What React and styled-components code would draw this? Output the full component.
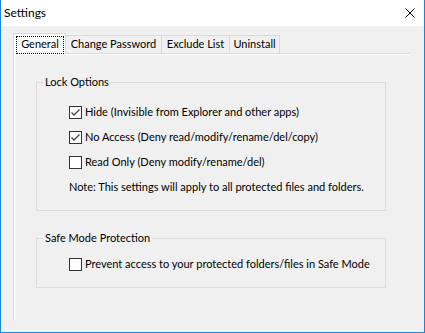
import React from 'react';
import styled, { createGlobalStyle, css } from 'styled-components';

const Global = createGlobalStyle`
  html, body { margin: 0; padding: 0; background: #f0f0f0; }
  body {
    font-family: Lato, "Noto Sans", sans-serif;
    font-size: 11px;
    color: #000;
  }
  * { box-sizing: border-box; }
`;

const Window = styled.div`
  width: 425px;
  height: 333px;
  display: flex;
  flex-direction: column;
  background: #f0f0f0;
  border: 1px solid #1a85d8;
  border-top: none;
`;

const TitleBar = styled.div`
  height: 26px;
  flex: none;
  background: #fff;
  display: flex;
  align-items: center;
  justify-content: space-between;
  padding: 0 9px 0 3px;
`;

const Title = styled.span`
  line-height: 16px;
  font-size: 12px;
`;

const CloseButton = styled.span`
  display: flex;
  width: 10px;
  height: 10px;
`;

const Body = styled.div`
  flex: 1;
  display: flex;
  flex-direction: column;
  padding: 7px 0 0 12px;
`;

const TabStrip = styled.div`
  display: flex;
  align-items: flex-end;
  height: 21px;
  margin-bottom: -1px;
  position: relative;
  z-index: 1;
`;

const Tab = styled.div`
  width: ${(p) => p.$w}px;
  border: 1px solid #d9d9d9;
  border-bottom: none;
  text-align: center;
  line-height: 12px;
  white-space: nowrap;
  & + & { margin-left: -1px; }
  ${(p) =>
    p.$active
      ? css`
          height: 21px;
          background: #fff;
        `
      : css`
          height: 18px;
          margin-bottom: 1px;
          padding-top: 2px;
          background: #f0f0f0;
        `}
`;

const FocusRing = styled.span`
  display: block;
  height: 18px;
  margin: 2px 1px 0 2px;
  border: 1px dotted #000;
  padding-top: 1px;
  line-height: 12px;
`;

const Panel = styled.div`
  width: 397px;
  height: 268px;
  border-top: 1px solid #d9d9d9;
  border-left: 1px solid #d9d9d9;
  box-shadow: inset 1px 1px 0 #fff;
  padding: 20px 0 0 22px;
  display: flex;
  flex-direction: column;
  gap: 19px;
`;

const Group = styled.fieldset`
  width: 350px;
  min-width: 0;
  margin: 0;
  border: 1px solid #dcdcdc;
  padding: ${(p) => p.$pt}px 0 15px 0;
`;

const Legend = styled.legend`
  margin-left: 6px;
  padding: 0 2px;
  line-height: 16px;
`;

const Rows = styled.div`
  display: flex;
  flex-direction: column;
  gap: 9px;
  padding-left: 32px;
`;

const Row = styled.label`
  display: flex;
  align-items: center;
  gap: 3px;
  height: 16px;
  line-height: 16px;
  white-space: nowrap;
`;

const Box = styled.span`
  width: 13px;
  height: 13px;
  flex: none;
  border: 1px solid #333;
  background: #fff;
  display: flex;
`;

const Note = styled.div`
  height: 16px;
  line-height: 16px;
  white-space: nowrap;
`;

function Check({ checked, children }) {
  return (
    <Row>
      <Box>
        {checked && (
          <svg width="11" height="11" viewBox="0 0 11 11">
            <path d="M1.5 5.5 L4 8 L9.5 2.5" fill="none" stroke="#444" strokeWidth="1.3" />
          </svg>
        )}
      </Box>
      <span>{children}</span>
    </Row>
  );
}

const tabs = [
  { label: 'General', w: 53, active: true },
  { label: 'Change Password', w: 97 },
  { label: 'Exclude List', w: 69 },
  { label: 'Uninstall', w: 51 },
];

const lockOptions = [
  { label: 'Hide (Invisible from Explorer and other apps)', checked: true },
  { label: 'No Access (Deny read/modify/rename/del/copy)', checked: true },
  { label: 'Read Only (Deny modify/rename/del)', checked: false },
];

export default function App() {
  return (
    <>
      <Global />
      <Window>
        <TitleBar>
          <Title>Settings</Title>
          <CloseButton>
            <svg width="10" height="10" viewBox="0 0 10 10">
              <path d="M0.5 0.5 L9.5 9.5 M9.5 0.5 L0.5 9.5" stroke="#000" strokeWidth="1" />
            </svg>
          </CloseButton>
        </TitleBar>
        <Body>
          <TabStrip>
            {tabs.map((t) => (
              <Tab key={t.label} $w={t.w} $active={t.active}>
                {t.active ? <FocusRing>{t.label}</FocusRing> : t.label}
              </Tab>
            ))}
          </TabStrip>
          <Panel>
            <Group $pt={14}>
              <Legend>Lock Options</Legend>
              <Rows>
                {lockOptions.map((o) => (
                  <Check key={o.label} checked={o.checked}>
                    {o.label}
                  </Check>
                ))}
                <Note>Note: This settings will apply to all protected files and folders.</Note>
              </Rows>
            </Group>
            <Group $pt={10}>
              <Legend>Safe Mode Protection</Legend>
              <Rows>
                <Check checked={false}>Prevent access to your protected folders/files in Safe Mode</Check>
              </Rows>
            </Group>
          </Panel>
        </Body>
      </Window>
    </>
  );
}
